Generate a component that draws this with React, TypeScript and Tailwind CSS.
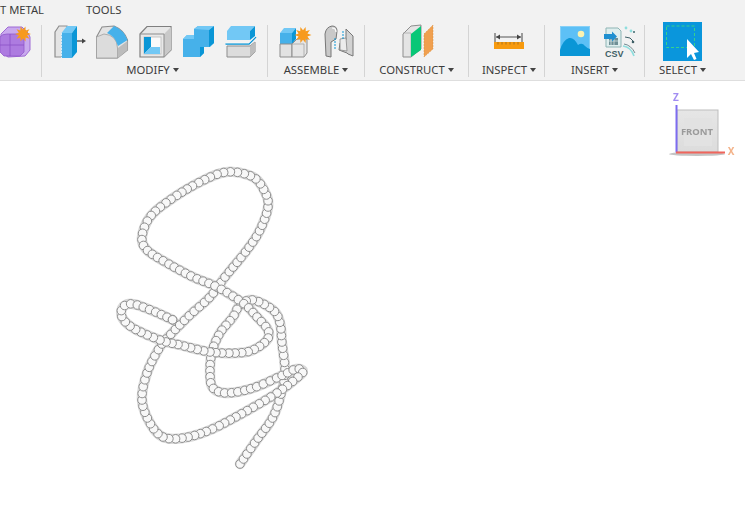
import React from "react";

const pts: [number, number][] = [
  [240,464],[256,441],[273,417],[282,390],[285,370],[282,343],[280,323],[273,310],[253,300],[240,305],[233,317],[220,333],[212,352],[210,373],[213,388],[227,393],[253,388],[283,375],[296,369],[303,371],[298,377],[277,393],[243,413],[210,430],[183,438],[163,437],[150,423],[142,400],[147,373],[160,347],[172,333],[190,315],[210,297],[225,277],[247,250],[260,230],[268,207],[265,192],[253,177],[227,172],[200,182],[170,200],[150,217],[142,237],[147,250],[167,263],[193,277],[217,287],[243,303],[257,317],[268,330],[267,340],[253,350],[237,353],[210,352],[180,345],[160,340],[133,328],[122,317],[123,307],[133,304],[153,311],[173,320],
];

function sample(points: [number, number][], spacing: number) {
  const dense: [number, number][] = [];
  for (let i = 0; i < points.length - 1; i++) {
    const p0 = points[Math.max(i - 1, 0)];
    const p1 = points[i];
    const p2 = points[i + 1];
    const p3 = points[Math.min(i + 2, points.length - 1)];
    for (let k = 0; k < 24; k++) {
      const t = k / 24;
      const f = (a: number, b: number, c: number, d: number) =>
        0.5 * (2 * b + (c - a) * t + (2 * a - 5 * b + 4 * c - d) * t * t + (3 * b - a - 3 * c + d) * t * t * t);
      dense.push([f(p0[0], p1[0], p2[0], p3[0]), f(p0[1], p1[1], p2[1], p3[1])]);
    }
  }
  const out: [number, number][] = [dense[0]];
  let acc = 0;
  for (let i = 1; i < dense.length; i++) {
    acc += Math.hypot(dense[i][0] - dense[i - 1][0], dense[i][1] - dense[i - 1][1]);
    if (acc >= spacing) {
      out.push(dense[i]);
      acc = 0;
    }
  }
  out.push(dense[dense.length - 1]);
  return out;
}

const beads = sample(pts, 6);
const spine = "M" + sample(pts, 2).map(([x, y]) => `${x.toFixed(1)} ${y.toFixed(1)}`).join(" L");

function Star({ cx, cy, r }: { cx: number; cy: number; r: number }) {
  const p: string[] = [];
  for (let i = 0; i < 20; i++) {
    const a = (i / 20) * Math.PI * 2;
    const q = i % 2 === 0 ? r : r * 0.55;
    p.push(`${cx + Math.cos(a) * q},${cy + Math.sin(a) * q}`);
  }
  return <polygon points={p.join(" ")} fill="#f79a1e" />;
}

const G = "#8d8d8d";
const B = "#46b1ea";
const D = "#0a96d6";
const L = "#72c8f5";

function Solid() {
  return (
    <svg width="31" height="34" viewBox="0 0 31 34" className="shrink-0">
      <path d="M1 9 L8 2 L22 2 L28 8 L30 12 L30 25 L25 31 L8 32 L2 28 L0 20 Z" fill="#c9a9ee" stroke="#9e6ad4" strokeWidth="1" />
      <path d="M0 12 Q2 9 7 9 L20 9 L24 12 L24 27 L20 31 L4 31 L0 27 Z" fill="#ad7be0" stroke="#9259cc" strokeWidth="0.8" />
      <path d="M0 20 L24 20 M10 9 L10 31" stroke="#8a50c6" strokeWidth="0.8" />
      <Star cx={23} cy={9} r={8} />
    </svg>
  );
}

function Press() {
  return (
    <svg width="32" height="34" viewBox="0 0 32 34" className="shrink-0">
      <path d="M1 7 L5 1 L13 1 L13 32 L1 32 Z" fill="#e4e4e4" stroke={G} strokeWidth="1.2" />
      <path d="M7.5 8 L13 1 L23 1 L18 8 Z" fill={L} />
      <path d="M7.5 8 L18 8 L18 33 L7.5 33 Z" fill={B} />
      <path d="M18 8 L23 1 L23 27 L18 33 Z" fill={D} />
      <path d="M7.5 8 L7.5 33" stroke="#dbeef9" strokeWidth="1" strokeDasharray="2 1" />
      <path d="M23 16 L29 16" stroke="#555" strokeWidth="1.4" />
      <path d="M28 13.5 L32 16 L28 18.5 Z" fill="#444" />
    </svg>
  );
}

function Fillet() {
  return (
    <svg width="33" height="34" viewBox="0 0 33 34" className="shrink-0">
      <path d="M0.5 12 L6 2 L18 1 Q28 5 31.5 15 L31.5 25 L21.5 33 L0.5 33 Z" fill="#e3e3e3" stroke={G} strokeWidth="1.1" />
      <path d="M0.5 12 L8 9 Q21 10 21.5 23 L21.5 33 L0.5 33 Z" fill="#dcdcdc" stroke="#a0a0a0" strokeWidth="0.8" />
      <path d="M11 8 L18 1 Q28 5 31.5 15 L22 21 Q19 11 11 8 Z" fill={B} />
      <path d="M22 23 L31.5 16 L31.5 25 L22 33 Z" fill="#bcbcbc" />
    </svg>
  );
}

function Shell() {
  return (
    <svg width="33" height="34" viewBox="0 0 33 34" className="shrink-0">
      <path d="M1 9 L8 1.5 L32 1.5 L32 25 L25 32 L1 32 Z" fill="#e8e8e8" stroke="#7f7f7f" strokeWidth="1.2" />
      <path d="M25 9 L32 2 L32 25 L25 32 Z" fill="#c9c9c9" />
      <path d="M1 9 L25 9 L25 32" fill="none" stroke="#8d8d8d" strokeWidth="1" />
      <rect x="5" y="12" width="17" height="17" fill="#fafafa" stroke="#bcbcbc" strokeWidth="0.8" />
      <path d="M5 12 L12 12 L12 22 L5 29 Z" fill={D} />
      <path d="M12 22 L21 22 L21 29 L5 29 Z" fill={L} />
    </svg>
  );
}

function Combine() {
  return (
    <svg width="33" height="34" viewBox="0 0 33 34" className="shrink-0">
      <path d="M1 14 L5 10 L12 10 L12 4 L16 1 L32 1 L32 18 L28 22 L22 22 L22 28 L18 32 L1 32 Z" fill={B} />
      <path d="M27 5 L32 1 L32 18 L27 22 Z" fill={D} />
      <path d="M18 22 L22 22 L22 28 L18 32 Z" fill={D} />
      <path d="M1 14 L5 10 L12 10 L12 14 Z" fill={L} />
      <path d="M12 4 L16 1 L32 1 L27 5 Z" fill={L} />
    </svg>
  );
}

function Split() {
  return (
    <svg width="32" height="34" viewBox="0 0 32 34" className="shrink-0">
      <path d="M2 6 L6 1 L30 1 L25 6 Z" fill={L} />
      <path d="M2 6 L25 6 L25 15 L2 15 Z" fill={L} />
      <path d="M25 6 L30 1 L30 11 L25 15 Z" fill={D} />
      <path d="M0.5 19 L24 19 L31 12" fill="none" stroke={D} strokeWidth="1.4" />
      <path d="M0.5 18 L24 18 L31 11" fill="none" stroke="#fff" strokeWidth="0.5" />
      <path d="M2 21 L25 21 L30 17 L30 27 L25 32 L2 32 Z" fill="#dcdcdc" stroke={G} strokeWidth="1" />
      <path d="M25 21 L30 17 L30 27 L25 32 Z" fill="#bdbdbd" />
    </svg>
  );
}

function NewComponent() {
  return (
    <svg width="33" height="34" viewBox="0 0 33 34" className="shrink-0">
      <path d="M1 8 L5 3 L17 3 L13 8 Z" fill={L} />
      <path d="M1 8 L13 8 L13 19 L1 19 Z" fill={B} />
      <path d="M13 8 L17 3 L17 14 L13 19 Z" fill={D} />
      <path d="M1 19 L13 19 L13 32 L1 32 Z" fill="#e2e2e2" stroke={G} strokeWidth="1" />
      <path d="M13 19 L18 14 L28 14 L28 28 L25 32 L13 32 Z" fill="#e5e5e5" stroke={G} strokeWidth="1" />
      <path d="M13 19 L25 19 L25 32" fill="none" stroke="#a5a5a5" strokeWidth="0.8" />
      <Star cx={24} cy={10} r={8.5} />
    </svg>
  );
}

function Joint() {
  return (
    <svg width="31" height="34" viewBox="0 0 31 34" className="shrink-0">
      <path d="M1 9 Q2 2 8 1 Q13 1 13 6 L12 14 L7 17 L7 32 L2 31 Z" fill="#c9c9c9" stroke="#777" strokeWidth="1" />
      <path d="M8 3 Q12 3 12 7" fill="none" stroke="#fff" strokeWidth="1.2" />
      <path d="M11 13 L11 24" stroke={D} strokeWidth="1" strokeDasharray="2 1" />
      <path d="M16 18 L22 15 L22 4 L29 11 L29 31 L24 29 L23 28 L15 25 Z" fill="#d2d2d2" stroke="#777" strokeWidth="1" />
      <path d="M16 14 L22 13 L23 26 L16 25 Z" fill="#ececec" stroke="#888" strokeWidth="0.8" />
      <path d="M19 6 L19 15" stroke={D} strokeWidth="1" strokeDasharray="2 1" />
    </svg>
  );
}

function Plane() {
  return (
    <svg width="32" height="35" viewBox="0 0 32 35" className="shrink-0">
      <path d="M1 10 L9 2 L19 1 L19 25 L9 33 L1 33 Z" fill="#e4e4e4" stroke={G} strokeWidth="1" />
      <path d="M1 9 L9 9 L9 33" fill="none" stroke="#a8a8a8" strokeWidth="0.8" />
      <path d="M9 10 L19 2 L19 26 L9 33 Z" fill="#08c777" />
      <path d="M22 10 L31 1 L31 25 L22 33 Z" fill="#f0a050" />
      <path d="M22 10 L31 1 L31 25 L22 33 Z" fill="none" stroke="#d98a35" strokeWidth="0.6" strokeDasharray="1.5 1.5" />
    </svg>
  );
}

function Measure() {
  return (
    <svg width="32" height="20" viewBox="0 0 32 20" className="shrink-0">
      <path d="M2 2 L2 11 M29 2 L29 11" stroke="#444" strokeWidth="1" />
      <path d="M3 6 L28 6" stroke="#555" strokeWidth="1" />
      <path d="M3 6 L7 3.5 L7 8.5 Z M28 6 L24 3.5 L24 8.5 Z" fill="#444" />
      <rect x="1" y="11" width="30" height="7" fill="#f79a0e" />
      <path d="M5 11 V13.5 M9 11 V13.5 M13 11 V13.5 M17 11 V13.5 M21 11 V13.5 M25 11 V13.5" stroke="#9a6b1e" strokeWidth="0.8" />
    </svg>
  );
}

function ImageIcon() {
  return (
    <svg width="30" height="30" viewBox="0 0 30 30" className="shrink-0">
      <rect x="0" y="0" width="30" height="30" fill="#5dc0f6" />
      <rect x="0.5" y="0.5" width="29" height="29" fill="none" stroke="#86d0f7" />
      <circle cx="21" cy="8" r="3.3" fill="#fbf3b0" />
      <path d="M0 24 Q3 14 9 12 Q14 11 18 19 Q22 16 25 20 Q28 23 30 23 L30 30 L0 30 Z" fill="#0a96d6" />
    </svg>
  );
}

function Csv() {
  return (
    <svg width="33" height="32" viewBox="0 0 33 32" className="shrink-0">
      <path d="M3 2 L15 2 L18 5 L18 21 L3 21 Z" fill="#dfeeee" stroke="#8fb5b5" strokeWidth="1" />
      <rect x="6" y="12" width="9" height="7" fill="#6f8f95" />
      <path d="M8 12 V19 M11 12 V19 M6 15 H15" stroke="#dfeeee" strokeWidth="0.7" />
      <rect x="1" y="8" width="9" height="5" fill="#1f8fd0" />
      <path d="M9 5.5 L14 10.5 L9 15.5 Z" fill="#1f8fd0" />
      <text x="2" y="31" fontFamily="Liberation Sans, sans-serif" fontWeight="700" fontSize="9" fill="#3f5f66">CSV</text>
      <circle cx="23" cy="2" r="1.4" fill="#8fdede" />
      <circle cx="28" cy="5" r="1.4" fill="#8fdede" />
      <circle cx="31" cy="6" r="1" fill="#3f6a70" />
      <path d="M22 11 Q28 11 30 15" fill="none" stroke="#3f5f66" strokeWidth="1" />
      <circle cx="30" cy="16" r="1.3" fill="#3f5f66" />
      <path d="M20 20 Q28 21 31 30" fill="none" stroke="#8fdede" strokeWidth="1.6" />
      <path d="M21 18 Q28 19 32 27" fill="none" stroke="#3f5f66" strokeWidth="0.7" />
    </svg>
  );
}

function SelectIcon() {
  return (
    <svg width="39" height="39" viewBox="0 0 39 39" className="shrink-0">
      <rect width="39" height="39" fill="#0a96dc" />
      <rect x="3.5" y="4" width="28" height="21.5" fill="none" stroke="#35d28a" strokeWidth="1" strokeDasharray="3 2" />
      <path d="M24 17 L24 36 L28 32 L31 38 L33.5 37 L31 31 L36 30 Z" fill="#fff" />
    </svg>
  );
}

function Label({ children }: { children: string }) {
  return (
    <div className="mt-auto mb-[3px] h-[14px] text-[11.3px] leading-[14px] text-[#3c3c3c] text-center whitespace-nowrap">
      {children}
      <span className="ml-[3px] inline-block w-0 h-0 border-x-[3px] border-x-transparent border-t-[4px] border-t-[#444] align-[2px]" />
    </div>
  );
}

function Sep() {
  return <div className="w-px h-[52px] mt-[25px] bg-[#d4d4d4] shrink-0" />;
}

export default function App() {
  return (
    <div className="w-[745px] h-[515px] overflow-hidden bg-white flex flex-col font-['Noto_Sans','Open_Sans',sans-serif]">
      <header className="h-[81px] shrink-0 bg-[#f2f2f2] border-b border-[#dedede] relative overflow-hidden">
        <div className="absolute left-0 top-0 h-[20px] flex items-center text-[11.2px] text-[#3c3c3c] whitespace-nowrap">
          <span className="w-[86px]">T METAL</span>
          <span>TOOLS</span>
        </div>
        <div className="flex h-[80px]">
          <div className="w-[41px] shrink-0 pt-[25px] flex">
            <Solid />
          </div>
          <Sep />
          <div className="w-[225px] shrink-0 flex flex-col pt-[25px] pr-[4px]">
            <div className="flex gap-[10px] pl-[12px] items-start">
              <Press />
              <Fillet />
              <Shell />
              <Combine />
              <Split />
            </div>
            <Label>MODIFY</Label>
          </div>
          <Sep />
          <div className="w-[96px] shrink-0 flex flex-col pt-[25px]">
            <div className="flex gap-[12px] pl-[11px]">
              <NewComponent />
              <Joint />
            </div>
            <Label>ASSEMBLE</Label>
          </div>
          <Sep />
          <div className="w-[103px] shrink-0 flex flex-col pt-[24px]">
            <div className="flex justify-center pl-[2px]">
              <Plane />
            </div>
            <Label>CONSTRUCT</Label>
          </div>
          <Sep />
          <div className="w-[75px] shrink-0 flex flex-col pt-[31px] pl-[5px]">
            <div className="flex justify-center">
              <Measure />
            </div>
            <Label>INSPECT</Label>
          </div>
          <Sep />
          <div className="w-[99px] shrink-0 flex flex-col pt-[26px]">
            <div className="flex gap-[13px] pl-[15px]">
              <ImageIcon />
              <Csv />
            </div>
            <Label>INSERT</Label>
          </div>
          <Sep />
          <div className="w-[75px] shrink-0 flex flex-col pt-[22px]">
            <div className="flex justify-center">
              <SelectIcon />
            </div>
            <Label>SELECT</Label>
          </div>
        </div>
      </header>
      <main className="relative flex-1">
        <svg width="745" height="434" viewBox="0 81 745 434" className="absolute left-0 top-0 blur-[0.6px]">
          <path d={spine} fill="none" stroke="#808080" strokeWidth="10.4" strokeLinejoin="round" strokeLinecap="round" opacity="0.3" />
          {beads.map(([x, y], i) => (
            <circle key={i} cx={x} cy={y} r={4.3} fill="#f8f8f8" stroke="#8e8e8e" strokeWidth="1" />
          ))}
        </svg>
        <div className="absolute left-[665px] top-[10px] w-[78px] h-[72px]">
          <svg width="78" height="72" viewBox="665 91 78 72" className="blur-[0.5px]">
            <defs>
              <linearGradient id="cube" x1="0" y1="0" x2="0" y2="1">
                <stop offset="0" stopColor="#e6e6e6" />
                <stop offset="1" stopColor="#dcdcdc" />
              </linearGradient>
            </defs>
            <ellipse cx="697" cy="154" rx="28" ry="2" fill="#c4c4c4" />
            <rect x="677" y="110" width="41" height="42" fill="url(#cube)" stroke="#bdbdbd" />
            <rect x="684" y="118" width="28" height="28" fill="#e2e2e2" />
            <path d="M676.5 105 V152.5" stroke="#7d6cf0" strokeWidth="2" />
            <path d="M676 152.5 H725" stroke="#f0655c" strokeWidth="2" />
            <text x="697" y="134.5" textAnchor="middle" fontFamily="Noto Sans, sans-serif" fontWeight="700" fontSize="9.5" fill="#9a9a9a">FRONT</text>
            <text x="676" y="101" textAnchor="middle" fontFamily="Noto Sans, sans-serif" fontWeight="700" fontSize="10" fill="#a28df2">Z</text>
            <text x="731" y="155" textAnchor="middle" fontFamily="Noto Sans, sans-serif" fontWeight="700" fontSize="10" fill="#f3b38a">X</text>
          </svg>
        </div>
      </main>
    </div>
  );
}
